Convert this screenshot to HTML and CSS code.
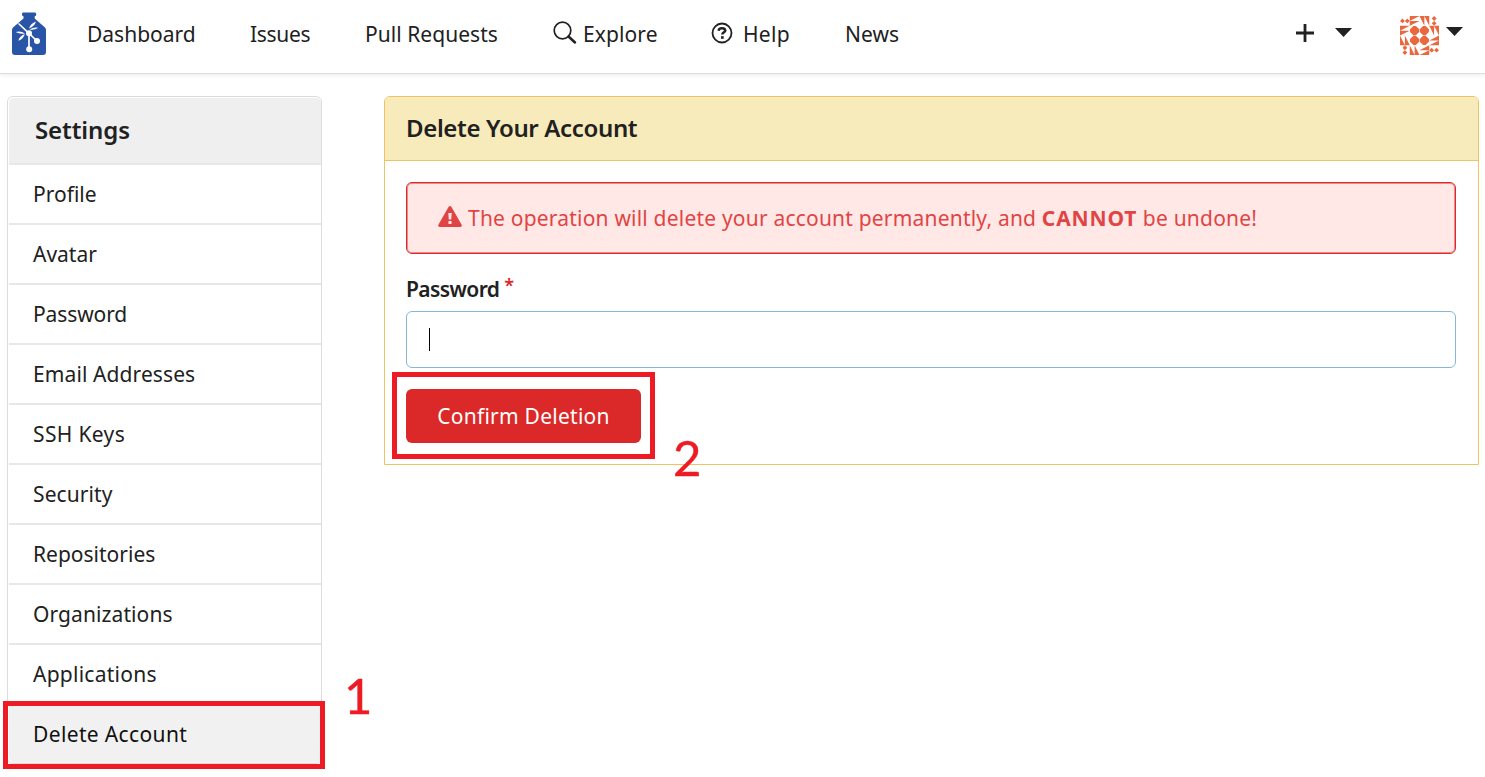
FILE: index.html
```html
<!DOCTYPE html>
<html lang="en">
<head>
<meta charset="utf-8">
<title>Delete Account - Settings</title>
<link rel="stylesheet" href="styles.css">
</head>
<body>
<header class="navbar">
  <svg class="logo" viewBox="0 0 34 43" width="34" height="43">
    <path fill="#2855a5" d="M11 0.500h12q1.200 0 1.200 1.500v1q0 1-1.500 1.200v2.300L33 15.500q1 1 1 2.500V40q0 3-3 3H3q-3 0-3-3V18q0-1.500 1-2.500L11.500 6.500V4.200Q10 4 10 3V2q0-1.500 1-1.500z"/>
    <g fill="none" stroke="#fff" stroke-width="1.700" stroke-linecap="round" stroke-linejoin="round">
      <path d="M7 12l10 9.300 8 7.700M17 21v16"/>
    </g>
    <g fill="#fff">
      <path d="M17 16.500Q18.500 11.500 24 9.500q-1.500 5-7 7zM17.500 17.500q4.500-3 8.800-1.700-4 2.700-8.800 1.700zM13 21.500Q8 22.500 3.500 20q5-1.700 9.500 1.500zM12.800 22Q11.500 27 6.300 28.800 7.500 24 12.800 22z"/>
      <circle cx="17" cy="21.300" r="3"/><circle cx="25" cy="29" r="3"/><circle cx="17.200" cy="37.300" r="3"/>
    </g>
  </svg>
  <nav class="menu">
    <a class="w-dashboard">Dashboard</a>
    <a class="w-issues">Issues</a>
    <a class="w-pulls">Pull Requests</a>
    <a class="with-icon w-explore"><svg class="search" viewBox="0 0 24 24" width="24" height="24"><circle cx="9.500" cy="9.500" r="8.300" fill="none" stroke="#212121" stroke-width="1.700"/><path d="M15.500 15.500l6.500 6" stroke="#212121" stroke-width="2.500" stroke-linecap="round"/></svg><span>Explore</span></a>
    <a class="with-icon w-help"><svg class="question" viewBox="0 0 22 22" width="22" height="22"><circle cx="11" cy="11" r="9.500" fill="none" stroke="#212121" stroke-width="1.800"/><path d="M7.500 8.700Q8 6.300 11 6.300t3.300 2.300c0 1.700-3 1.700-3 4" fill="none" stroke="#212121" stroke-width="2.500"/><path d="M10 14.200h2.700v2.600H10z" fill="#212121"/></svg><span>Help</span></a>
    <a class="w-news">News</a>
  </nav>
  <div class="actions">
    <svg class="plus" viewBox="0 0 18 18" width="18" height="18"><path d="M9 0v18M0 9h18" stroke="#212121" stroke-width="2.800"/></svg>
    <svg class="caret" viewBox="0 0 17 9" width="17" height="9"><path d="M0 0h17L8.500 9z" fill="#212121"/></svg>
    <svg class="avatar" viewBox="0 0 40 40" width="39" height="39">
      <defs>
        <g id="side">
          <path d="M2.500 2.500L5 5 2.500 7.500 0 5zM7.500 2.500L10 5 7.500 7.500 5 5z"/>
          <path d="M0 10h10L0 15zM0 15h10L0 20z"/>
          <path d="M0 30V20l5 10zM5 30V20l5 10z"/>
          <path d="M13.700 10.300h2.600l3.400 3.400v2.600l-3.400 3.400h-2.600l-3.400-3.400v-2.600z"/>
        </g>
      </defs>
      <g fill="#e9683f">
        <use href="#side"/>
        <use href="#side" transform="rotate(90 20 20)"/>
        <use href="#side" transform="rotate(180 20 20)"/>
        <use href="#side" transform="rotate(270 20 20)"/>
      </g>
    </svg>
    <svg class="caret caret-user" viewBox="0 0 17 9" width="17" height="9"><path d="M0 0h17L8.500 9z" fill="#212121"/></svg>
  </div>
</header>
<main class="page">
  <aside class="sidebar">
    <h4 class="side-title"><span>Settings</span></h4>
    <a class="w-profile"><span>Profile</span></a>
    <a class="w-avatar"><span>Avatar</span></a>
    <a class="w-password"><span>Password</span></a>
    <a class="w-email"><span>Email Addresses</span></a>
    <a class="w-ssh"><span>SSH Keys</span></a>
    <a class="w-security"><span>Security</span></a>
    <a class="w-repos"><span>Repositories</span></a>
    <a class="w-orgs"><span>Organizations</span></a>
    <a class="w-apps"><span>Applications</span></a>
    <a class="active w-delete"><span>Delete Account</span></a>
    <div class="frame frame-side"></div>
    <div class="step step-one">1</div>
  </aside>
  <section class="panel">
    <h4 class="panel-title"><span>Delete Your Account</span></h4>
    <div class="panel-body">
      <div class="warning">
        <svg viewBox="0 0 24 21" width="24" height="21"><path d="M10.500 1q1.500-2 3 0l10 17.500q1 2.500-1.500 2.500H2q-2.500 0-1.500-2.500z" fill="#e04545"/><path d="M10.300 7h3.400l-.5 6.500h-2.400zM10.500 15h3v3h-3z" fill="#ffe8e6"/></svg>
        <p>The operation will delete your account permanently, and <b>CANNOT</b> be undone!</p>
      </div>
      <label class="field-label"><span>Password</span><i>*</i></label>
      <div class="field"><span class="cursor"></span></div>
      <div class="confirm-wrap">
        <button class="confirm"><span>Confirm Deletion</span></button>
        <div class="frame frame-confirm"></div>
        <div class="step step-two">2</div>
      </div>
    </div>
  </section>
</main>
</body>
</html>
```
FILE: styles.css
```css
* { box-sizing: border-box; }
body {
  margin: 0;
  width: 1485px;
  height: 777px;
  overflow: hidden;
  background: #fff;
  color: #212121;
  font: 21px/30px "Noto Sans", "Open Sans", sans-serif;
}
h4, p { margin: 0; }
.navbar {
  display: flex;
  height: 74px;
  border-bottom: 1px solid #dcdcdd;
  box-shadow: 0 2px 4px rgba(0, 0, 0, .06);
}
.logo { margin: 12px 0 0 12px; }
.menu {
  display: grid;
  grid-template-columns: 163px 115px 188px 158px 134px 100px;
  margin: 19px 0 0 41px;
  height: 30px;
  white-space: nowrap;
}
.w-issues { letter-spacing: -.3px; }
.w-pulls { letter-spacing: .05px; }
.w-explore { letter-spacing: .1px; }
.w-help { letter-spacing: .3px; }
.with-icon { display: flex; }
.search { margin: 2px 6px 0 0; }
.question { margin: 3px 10px 0 0; }
.actions { display: flex; margin-left: auto; }
.plus { margin: 24px 21px 0 0; }
.caret { margin: 28px 48px 0 0; }
.avatar { margin: 16px 7px 0 0; }
.caret-user { margin: 27px 22px 0 0; }
.page {
  display: flex;
  align-items: flex-start;
  gap: 62px;
  padding: 22px 6px 0 7px;
}
.sidebar {
  position: relative;
  width: 315px;
  border: 1px solid #dcdcdd;
  border-radius: 6px;
  padding: 1px 0 0 1px;
}
.sidebar a {
  display: flex;
  align-items: center;
  height: 60px;
  padding-left: 24px;
  border-top: 2px solid #e8e8e8;
  white-space: nowrap;
}
.side-title {
  display: flex;
  align-items: center;
  height: 65px;
  padding: 0 0 2px 26px;
  background: #efefef;
  border-radius: 5px 5px 0 0;
  font-size: 24px;
  font-weight: 600;
  letter-spacing: -.1px;
}
.w-password { letter-spacing: -.1px; }
.w-email { letter-spacing: .1px; }
.w-ssh { letter-spacing: .35px; }
.w-security, .w-orgs { letter-spacing: .1px; }
.w-apps { letter-spacing: .25px; }
.w-delete { letter-spacing: .36px; }
.sidebar .active { background: #f1f1f1; color: #111; border-top-color: #f1f1f1; border-radius: 0 0 6px 6px; }
.frame { position: absolute; border: 5px solid #ed1c24; }
.frame-side { left: -5px; bottom: -6px; width: 322px; height: 68px; }
.step {
  position: absolute;
  color: #ed1c24;
  font: 49px/48px Lato, "Open Sans", sans-serif;
  -webkit-text-stroke: .4px #ed1c24;
}
.step-one { left: 336px; top: 574px; }
.panel {
  width: 1095px;
  border: 1px solid #efc262;
  border-radius: 6px 6px 0 0;
}
.panel-title {
  display: flex;
  align-items: center;
  height: 64px;
  padding: 0 0 2px 21px;
  background: #f8ebbb;
  border-bottom: 1px solid #efc262;
  border-radius: 5px 5px 0 0;
  font-size: 24px;
  font-weight: 600;
  letter-spacing: -.35px;
}
.panel-body { padding: 21px 22px 21px 21px; }
.warning {
  display: flex;
  align-items: center;
  height: 72px;
  padding-left: 31px;
  border: 1px solid #db2828;
  border-radius: 6px;
  box-shadow: inset 0 0 0 1px #ef8a8a;
  background: #ffe8e6;
  color: #e04545;
  letter-spacing: .2px;
  white-space: nowrap;
}
.warning b { letter-spacing: .85px; }
.warning svg { margin: -3px 6px 0 0; }
.field-label {
  display: flex;
  height: 30px;
  margin-top: 20px;
  font-weight: 600;
  letter-spacing: -.6px;
}
.field-label i { margin-left: 5px; font-style: normal; color: #db2828; font-size: 18px; line-height: 22px; }
.field {
  height: 57px;
  margin-top: 7px;
  padding: 16px 0 0 22px;
  border: 1px solid #85b7d9;
  border-radius: 6px;
}
.cursor { display: block; width: 1px; height: 23px; background: #000; }
.confirm-wrap { position: relative; margin-top: 21px; height: 54px; }
.confirm {
  width: 235px;
  height: 54px;
  padding: 0;
  border: 0;
  border-radius: 6px;
  background: #db2828;
  color: #fff;
  font: inherit;
  letter-spacing: .25px;
  white-space: nowrap;
}
.frame-confirm { left: -14px; top: -17px; width: 263px; height: 87px; }
.step-two { left: 267px; top: 44px; }
```
